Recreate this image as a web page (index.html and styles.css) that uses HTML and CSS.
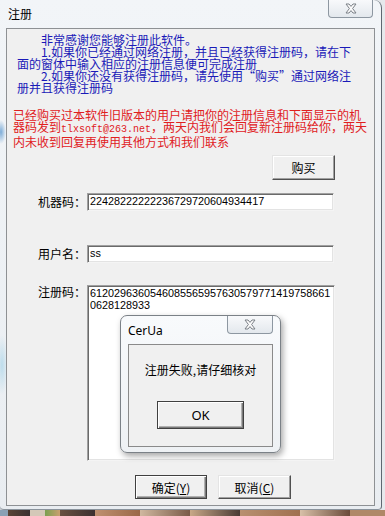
FILE: index.html
```html
<!DOCTYPE html>
<html lang="zh-CN">
<head>
<meta charset="utf-8">
<title>注册</title>
<link rel="stylesheet" href="styles.css">
</head>
<body>
<div class="window">
  <div class="titlebar">
    <span class="title">注册</span>
    <div class="close">
      <svg width="12" height="11" viewBox="-1 -1 12 11"><path d="M0 0H3L5 2.4 7 0H10L6.6 4.5 10 9H7L5 6.6 3 9H0L3.4 4.5Z" fill="#fbfbfb" stroke="#7b8087" stroke-width="1"/></svg>
    </div>
  </div>
  <div class="client">
    <p class="intro"><span class="ind"></span>非常感谢您能够注册此软件。<br><span class="ind"></span>1.如果你已经通过网络注册，并且已经获得注册码，请在下<br>面的窗体中输入相应的注册信息便可完成注册<br><span class="ind"></span>2.如果你还没有获得注册码，请先使用“购买”通过网络注<br>册并且获得注册码</p>
    <p class="notice">已经购买过本软件旧版本的用户请把你的注册信息和下面显示的机<br>器码发到<span class="mono">tlxsoft@263.net</span>，两天内我们会回复新注册码给你，两天<br>内未收到回复再使用其他方式和我们联系</p>
    <div class="buy-row"><div class="btn buy">购买</div></div>
    <div class="row row-machine">
      <div class="label">机器码：</div>
      <div class="field">22428222222236729720604934417</div>
    </div>
    <div class="row row-user">
      <div class="label">用户名：</div>
      <div class="field">ss</div>
    </div>
    <div class="row row-code">
      <div class="label label-top">注册码：</div>
      <div class="field area">6120296360546085565957630579771419758661<br>0628128933</div>
    </div>
    <div class="btn-row">
      <div class="btn default ok-main">确定(<u>Y</u>)</div>
      <div class="btn cancel">取消(<u>C</u>)</div>
    </div>
  </div>

  <div class="msgbox">
    <div class="msg-titlebar">
      <span class="msg-title">CerUa</span>
      <div class="close msg-close">
        <svg width="12" height="11" viewBox="-1 -1 12 11"><path d="M0 0H3L5 2.4 7 0H10L6.6 4.5 10 9H7L5 6.6 3 9H0L3.4 4.5Z" fill="#fbfbfb" stroke="#7b8087" stroke-width="1"/></svg>
      </div>
    </div>
    <div class="msg-client">
      <div class="msg-text">注册失败,请仔细核对</div>
      <div class="btn default msg-ok">OK</div>
    </div>
  </div>
</div>
<div class="strip"></div>
</body>
</html>
```

FILE: styles.css
```css
* { box-sizing: border-box; }
html, body { margin: 0; padding: 0; }
body {
  width: 385px;
  height: 516px;
  overflow: hidden;
  background: linear-gradient(90deg, #c9ced3, #e6e9ec);
  font-family: "Noto Sans CJK SC", "Noto Sans", sans-serif;
  font-size: 12px;
  color: #000;
  display: flex;
  flex-direction: column;
}

.window {
  position: relative;
  width: 382px;
  height: 510px;
  padding: 0 6px 3px 6px;
  display: flex;
  flex-direction: column;
  background:
    radial-gradient(ellipse 5px 12px at 1px 132px, rgba(105,160,210,0.85), rgba(105,160,210,0)),
    radial-gradient(ellipse 6px 30px at 2px 365px, rgba(150,205,230,0.55), rgba(150,205,230,0)),
    linear-gradient(#f2f5f8, #e9edf1);
  border-right: 1px solid #5f6871;
  border-bottom: 1px solid #8a939c;
  border-top-right-radius: 8px;
  border-bottom-right-radius: 4px;
  border-bottom-left-radius: 4px;
}

.titlebar {
  height: 28px;
  display: flex;
  align-items: flex-start;
  flex: none;
}
.title {
  margin: 6px 0 0 2px;
  line-height: 16px;
}
.close {
  margin-left: auto;
  margin-right: 2px;
  width: 45px;
  height: 18px;
  border: 1px solid #8d97a1;
  border-top: none;
  border-radius: 0 0 4px 4px;
  background: linear-gradient(#f8f9fb, #e3e8ed);
  display: flex;
  align-items: center;
  justify-content: center;
}

.client {
  flex: 1;
  border: 1px solid #8e9194;
  background: #f0f0f0;
  padding-top: 5px;
  display: flex;
  flex-direction: column;
}

.intro, .notice {
  margin: 0;
  line-height: 12px;
  white-space: nowrap;
}
.intro { padding-left: 10px; color: #1a1ab8; height: 60px; }
.ind { display: inline-block; width: 24px; }
.notice { margin-top: 15px; padding-left: 6px; color: #e0201e; height: 36px; }
.mono { font-family: "Liberation Mono", monospace; font-size: 10px; }

.btn {
  background: #f0f0f0;
  border: 1px solid;
  border-color: #e4e4e4 #505050 #505050 #e4e4e4;
  box-shadow: inset -1px -1px 0 #a0a0a0, inset 1px 1px 0 #ffffff;
  display: flex;
  align-items: center;
  justify-content: center;
  color: #000;
  font-size: 12px;
}
.btn.default {
  border-color: #404040;
  box-shadow: inset 1px 1px 0 #ffffff, inset -1px -1px 0 #7a7a7a, inset -2px -2px 0 #b0b0b0;
}
.btn u { text-decoration: underline; text-underline-offset: 1px; }

.buy-row {
  margin-top: 10px;
  display: flex;
  justify-content: flex-end;
  padding-right: 39px;
}
.buy { width: 63px; height: 25px; }

.row { display: flex; align-items: flex-start; }
.row-machine { margin-top: 13px; }
.row-user { margin-top: 34px; }
.row-code { margin-top: 22px; }
.label {
  width: 80px;
  padding-left: 31px;
  line-height: 18px;
  white-space: nowrap;
}
.label-top { line-height: 14px; }

.field {
  width: 247px;
  height: 18px;
  background: #fff;
  border: 1px solid;
  border-color: #a0a0a0 #f4f4f4 #f4f4f4 #a0a0a0;
  box-shadow: inset 1px 1px 0 #6a6a6a, inset -1px -1px 0 #e3e3e3;
  padding: 1px 2px 0 2px;
  font-family: "Liberation Sans", Arial, sans-serif;
  font-size: 10.8px;
  line-height: 12px;
  white-space: nowrap;
}
.area {
  width: 248px;
  height: 176px;
  padding-top: 1px;
}

.btn-row {
  margin-top: 14px;
  padding-left: 128px;
  display: flex;
  gap: 11px;
}
.ok-main { width: 72px; height: 24px; }
.cancel { width: 73px; height: 24px; }

.msgbox {
  position: absolute;
  left: 120px;
  top: 315px;
  width: 161px;
  height: 138px;
  border: 1px solid #7b8187;
  border-radius: 7px;
  background: linear-gradient(#f8fafc, #eef1f4);
  box-shadow: 2px 3px 6px rgba(0, 0, 0, 0.35);
  padding: 0 7px 5px 7px;
  display: flex;
  flex-direction: column;
}
.msg-titlebar {
  height: 28px;
  display: flex;
  align-items: flex-start;
  flex: none;
}
.msg-title {
  margin-top: 7px;
  line-height: 16px;
  font-family: "Noto Sans", "Open Sans", sans-serif;
  font-size: 12px;
}
.msg-close {
  margin-right: 0;
  width: 46px;
  height: 18px;
}
.msg-client {
  flex: 1;
  border: 1px solid #8a8a8a;
  background: #f0f0f0;
  display: flex;
  flex-direction: column;
  align-items: center;
  padding-top: 17px;
}
.msg-text { line-height: 16px; white-space: nowrap; }
.msg-ok {
  margin-top: 23px;
  width: 87px;
  height: 28px;
  font-family: "Noto Sans", "Open Sans", sans-serif;
  font-size: 13px;
}

.strip {
  height: 6px;
  width: 385px;
  background: linear-gradient(90deg,
    #8aa0b4 0, #8aa0b4 8px, #5a4436 8px, #3a3030 30px, #d4c8b8 30px, #d4c8b8 45px,
    #7aa050 45px, #caa070 60px, #6a5040 60px, #3c3030 95px, #c09070 95px, #9a6848 140px,
    #d0b8a0 140px, #7a5a48 190px, #c8a888 190px, #4a3a34 240px, #b89070 240px, #a07050 300px,
    #d8c0a8 300px, #6a4a3a 350px, #b08868 350px, #b08868 385px);
}
```
